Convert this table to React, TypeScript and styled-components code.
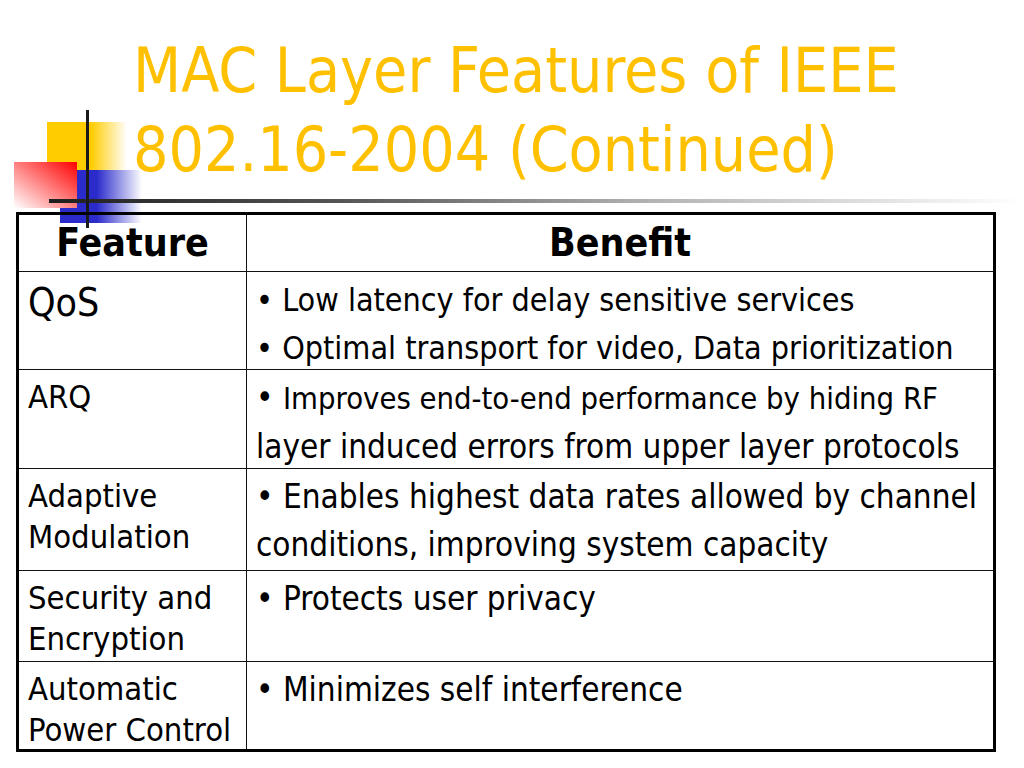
import React from "react";
import styled, { createGlobalStyle } from "styled-components";

const FONT = `"DejaVu Sans Condensed", "DejaVu Sans", "Liberation Sans", sans-serif`;

const Global = createGlobalStyle`
  html, body { margin: 0; padding: 0; background: #fff; }
  body { width: 1024px; height: 768px; overflow: hidden; font-family: ${FONT}; }
`;

const Slide = styled.div`
  position: relative;
  width: 1024px;
  height: 768px;
  background: #fff;
  overflow: hidden;
  font-family: ${FONT};
  color: #000;
`;

const Decor = styled.svg`
  position: absolute;
  left: 0;
  top: 0;
  z-index: 0;
  pointer-events: none;
`;

const Content = styled.div`
  position: relative;
  z-index: 1;
  display: flex;
  flex-direction: column;
  padding-top: 31px;
`;

const Title = styled.h1`
  margin: 0 0 0 133px;
  font-weight: normal;
  font-size: 62px;
  line-height: 79px;
  color: #ffc000;
  white-space: nowrap;
`;

const Table = styled.div`
  margin: 23px 0 0 16px;
  width: 980px;
  box-sizing: border-box;
  border: 3px solid #000;
  display: grid;
  grid-template-columns: 228px 1fr;
  grid-template-rows: 57px 98px 99px 102px 91px 87px;
`;

const HeadCell = styled.div<{ $first?: boolean }>`
  box-sizing: border-box;
  display: flex;
  align-items: center;
  justify-content: center;
  border-bottom: 1px solid #111;
  border-right: ${(p) => (p.$first ? "1px solid #111" : "none")};
  font-weight: bold;
  font-size: 39px;
  line-height: 56px;
`;

const FeatureCell = styled.div<{ $last?: boolean; $size?: number; $lh?: number }>`
  box-sizing: border-box;
  padding: 7px 0 0 9px;
  border-right: 1px solid #111;
  border-bottom: ${(p) => (p.$last ? "none" : "1px solid #111")};
  font-size: ${(p) => p.$size ?? 32.5}px;
  line-height: ${(p) => p.$lh ?? 41}px;
  white-space: nowrap;
`;

const BenefitCell = styled.div<{ $last?: boolean; $size?: number }>`
  box-sizing: border-box;
  padding: 4px 0 0 9px;
  border-bottom: ${(p) => (p.$last ? "none" : "1px solid #111")};
  font-size: ${(p) => p.$size ?? 33}px;
  line-height: 48px;
  white-space: nowrap;
`;

const Line = styled.div``;

const Small = styled.span`
  font-size: 30.7px;
`;

function Decoration() {
  return (
    <Decor width="1024" height="240" viewBox="0 0 1024 240">
      <defs>
        <linearGradient id="yel" x1="0" y1="0" x2="1" y2="0">
          <stop offset="0" stopColor="#ffcc00" />
          <stop offset="0.55" stopColor="#ffcc00" />
          <stop offset="1" stopColor="#ffcc00" stopOpacity="0" />
        </linearGradient>
        <linearGradient id="red" x1="1" y1="0" x2="0" y2="1">
          <stop offset="0" stopColor="#ff0000" />
          <stop offset="1" stopColor="#ff0000" stopOpacity="0" />
        </linearGradient>
        <linearGradient id="blu" x1="0" y1="0" x2="1" y2="0">
          <stop offset="0" stopColor="#2b2bcc" />
          <stop offset="0.45" stopColor="#2b2bcc" />
          <stop offset="1" stopColor="#2b2bcc" stopOpacity="0" />
        </linearGradient>
        <linearGradient id="rule" x1="0" y1="0" x2="1" y2="0">
          <stop offset="0" stopColor="#1e1e1e" />
          <stop offset="0.3" stopColor="#555" />
          <stop offset="0.62" stopColor="#b4b4b4" />
          <stop offset="1" stopColor="#ffffff" />
        </linearGradient>
      </defs>
      <rect x="47" y="122" width="80" height="48" fill="url(#yel)" />
      <rect x="60" y="170" width="82" height="53" fill="url(#blu)" />
      <rect x="14" y="162" width="63" height="46" fill="#fff" />
      <rect x="14" y="162" width="63" height="46" fill="url(#red)" />
      <rect x="49" y="199" width="975" height="4" fill="url(#rule)" />
      <rect x="86" y="110" width="3" height="118" fill="#1a1a1a" />
    </Decor>
  );
}

export default function App() {
  return (
    <Slide>
      <Global />
      <Decoration />
      <Content>
        <Title>
          MAC Layer Features of IEEE
          <br />
          802.16-2004 (Continued)
        </Title>
        <Table>
          <HeadCell $first>Feature</HeadCell>
          <HeadCell>Benefit</HeadCell>

          <FeatureCell $size={39} $lh={48}>QoS</FeatureCell>
          <BenefitCell $size={32}>
            <Line>• Low latency for delay sensitive services</Line>
            <Line>• Optimal transport for video, Data prioritization</Line>
          </BenefitCell>

          <FeatureCell>ARQ</FeatureCell>
          <BenefitCell>
            <Line>
              • <Small>Improves end-to-end performance by hiding RF</Small>
            </Line>
            <Line>layer induced errors from upper layer protocols</Line>
          </BenefitCell>

          <FeatureCell>
            Adaptive
            <br />
            Modulation
          </FeatureCell>
          <BenefitCell>
            <Line>• Enables highest data rates allowed by channel</Line>
            <Line>conditions, improving system capacity</Line>
          </BenefitCell>

          <FeatureCell>
            Security and
            <br />
            Encryption
          </FeatureCell>
          <BenefitCell>
            <Line>• Protects user privacy</Line>
          </BenefitCell>

          <FeatureCell $last>
            Automatic
            <br />
            Power Control
          </FeatureCell>
          <BenefitCell $last>
            <Line>• Minimizes self interference</Line>
          </BenefitCell>
        </Table>
      </Content>
    </Slide>
  );
}
